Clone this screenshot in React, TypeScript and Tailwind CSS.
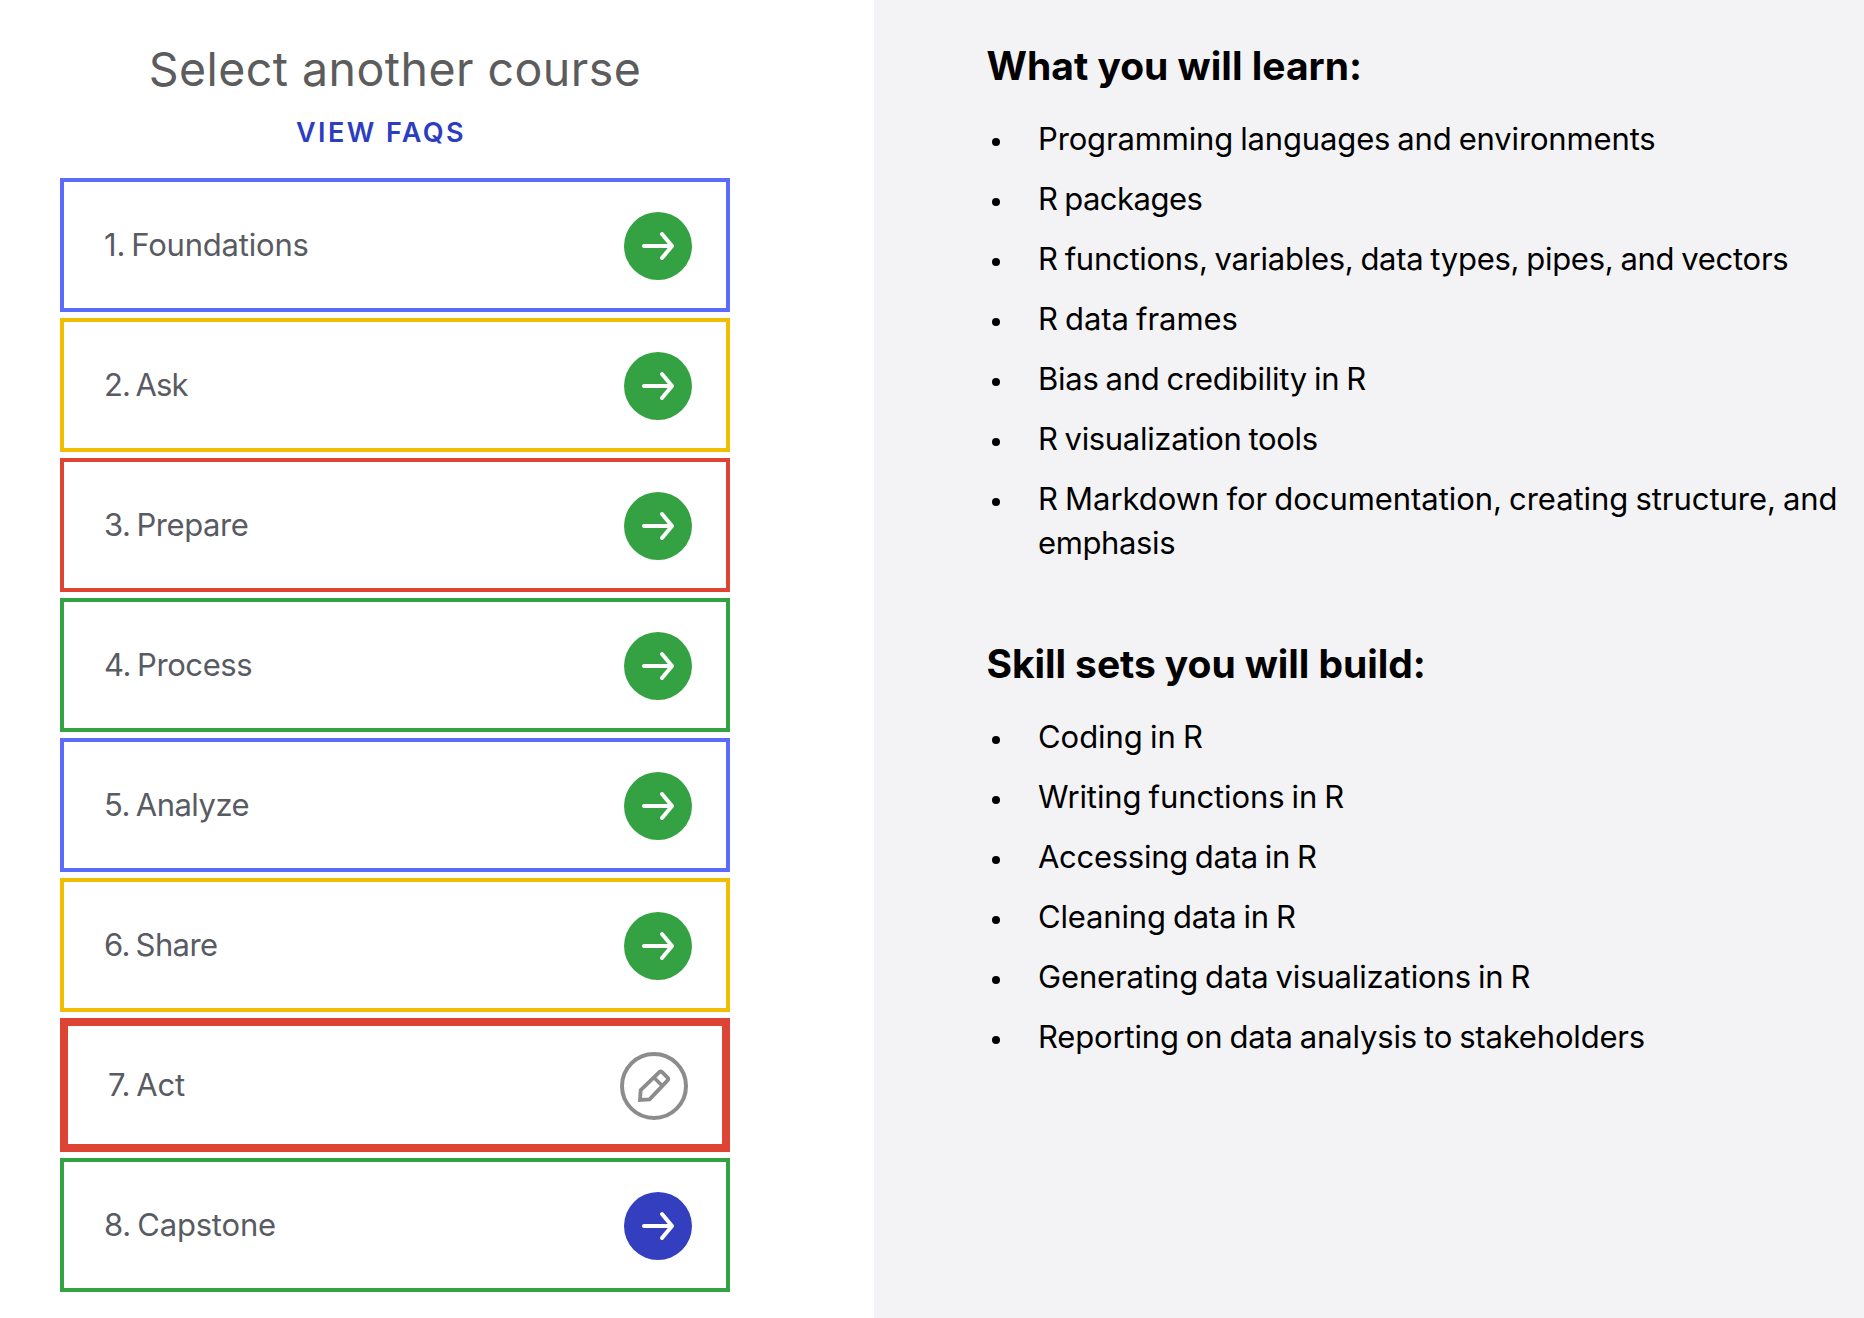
type Course = { label: string; tracking: string; border: string; status: "open" | "edit" | "next" };

const BLUE = "border-4 border-[#5b6cfa]";
const YELLOW = "border-4 border-[#f0bd00]";
const RED = "border-4 border-[#de4434]";
const GREEN = "border-4 border-[#33a243]";

const courses: Course[] = [
  { label: "1. Foundations", tracking: "tracking-[-0.2px]", border: BLUE, status: "open" },
  { label: "2. Ask", tracking: "tracking-[-0.86px]", border: YELLOW, status: "open" },
  { label: "3. Prepare", tracking: "tracking-[-0.43px]", border: RED, status: "open" },
  { label: "4. Process", tracking: "tracking-[-0.4px]", border: GREEN, status: "open" },
  { label: "5. Analyze", tracking: "tracking-[-0.5px]", border: BLUE, status: "open" },
  { label: "6. Share", tracking: "tracking-[-0.61px]", border: YELLOW, status: "open" },
  { label: "7. Act", tracking: "tracking-[-0.2px]", border: "border-8 border-[#de4434]", status: "edit" },
  { label: "8. Capstone", tracking: "tracking-[-0.18px]", border: GREEN, status: "next" },
];

type Line = { text: string; tracking: string };

const learn: Line[][] = [
  [{ text: "Programming languages and environments", tracking: "tracking-[-0.15px]" }],
  [{ text: "R packages", tracking: "tracking-[-0.5px]" }],
  [{ text: "R functions, variables, data types, pipes, and vectors", tracking: "tracking-[-0.27px]" }],
  [{ text: "R data frames", tracking: "tracking-[-0.06px]" }],
  [{ text: "Bias and credibility in R", tracking: "tracking-[-0.24px]" }],
  [{ text: "R visualization tools", tracking: "tracking-[-0.32px]" }],
  [
    { text: "R Markdown for documentation, creating structure, and", tracking: "tracking-[-0.05px]" },
    { text: "emphasis", tracking: "tracking-[-0.38px]" },
  ],
];

const skills: Line[][] = [
  [{ text: "Coding in R", tracking: "tracking-[-0.04px]" }],
  [{ text: "Writing functions in R", tracking: "tracking-[-0.1px]" }],
  [{ text: "Accessing data in R", tracking: "tracking-[-0.28px]" }],
  [{ text: "Cleaning data in R", tracking: "tracking-[-0.15px]" }],
  [{ text: "Generating data visualizations in R", tracking: "tracking-[-0.16px]" }],
  [{ text: "Reporting on data analysis to stakeholders", tracking: "tracking-[-0.17px]" }],
];

function StatusIcon({ status }: { status: Course["status"] }) {
  if (status === "edit") {
    return (
      <svg viewBox="0 0 68 68" className="mt-0.5 size-[68px] text-[#8c8c8c]" fill="none" stroke="currentColor" strokeWidth="4" strokeLinejoin="round">
        <circle cx="34" cy="34" r="32" />
        <path
          d="M20 48 L20.7 38.2 L39.3 20.2 Q40.7 18.9 42.1 20.2 L47.6 25.6 Q48.9 27 47.6 28.4 L29.6 47.4 Z"
          strokeWidth="3.8"
          strokeLinejoin="miter"
        />
        <path d="M34.3 26 L42.3 33.8" strokeWidth="3.6" />
      </svg>
    );
  }
  return (
    <svg viewBox="0 0 68 68" className={status === "open" ? "mt-0.5 size-[68px] text-[#34a242]" : "mt-0.5 size-[68px] text-[#333fbf]"}>
      <circle cx="34" cy="34" r="34" fill="currentColor" />
      <path d="M20 34 H47 M38 22 L48 34 L38 46" fill="none" stroke="white" strokeWidth="4" strokeLinecap="round" strokeLinejoin="round" />
    </svg>
  );
}

function CourseCard({ course }: { course: Course }) {
  return (
    <button className={`flex h-[134px] w-full items-center justify-between bg-white pr-[34px] pl-10 ${course.border}`}>
      <span className={`text-[31px] leading-[44px] whitespace-nowrap text-[#595b63] [word-spacing:-2.4px] ${course.tracking}`}>
        {course.label}
      </span>
      <StatusIcon status={course.status} />
    </button>
  );
}

function BulletList({ items }: { items: Line[][] }) {
  return (
    <ul className="mt-[27px] flex flex-col gap-4">
      {items.map((lines) => (
        <li key={lines[0].text} className="flex pl-[5.5px]">
          <span className="mt-[21px] mr-[38px] size-2 shrink-0 rounded-full bg-black" />
          <div>
            {lines.map((line) => (
              <span key={line.text} className={`block text-[31px] leading-[44px] whitespace-nowrap [word-spacing:-1.5px] ${line.tracking}`}>
                {line.text}
              </span>
            ))}
          </div>
        </li>
      ))}
    </ul>
  );
}

export default function App() {
  return (
    <div className="flex h-[1318px] w-[1864px] overflow-hidden bg-white font-['Inter',sans-serif]">
      <section className="w-[874px] shrink-0 pt-[41px] pl-[60px]">
        <div className="flex w-[670px] flex-col">
          <h1 className="text-center text-[46.5px] leading-[56px] tracking-[0.45px] text-[#5c5c5c]">Select another course</h1>
          <a className="mt-[18px] mb-[27px] block pr-[28px] text-center text-[27px] leading-[36px] font-semibold tracking-[2.4px] text-[#2c3ebf]">
            VIEW FAQS
          </a>
          <div className="flex flex-col gap-1.5">
            {courses.map((course) => (
              <CourseCard key={course.label} course={course} />
            ))}
          </div>
        </div>
      </section>
      <section className="min-w-0 flex-1 bg-[#f3f3f5] pt-[42px] pl-[112.5px] text-black">
        <h2 className="text-[39px] leading-[48px] font-bold">What you will learn:</h2>
        <BulletList items={learn} />
        <h2 className="mt-[75px] text-[39px] leading-[48px] font-bold tracking-[-0.08px]">Skill sets you will build:</h2>
        <BulletList items={skills} />
      </section>
    </div>
  );
}
